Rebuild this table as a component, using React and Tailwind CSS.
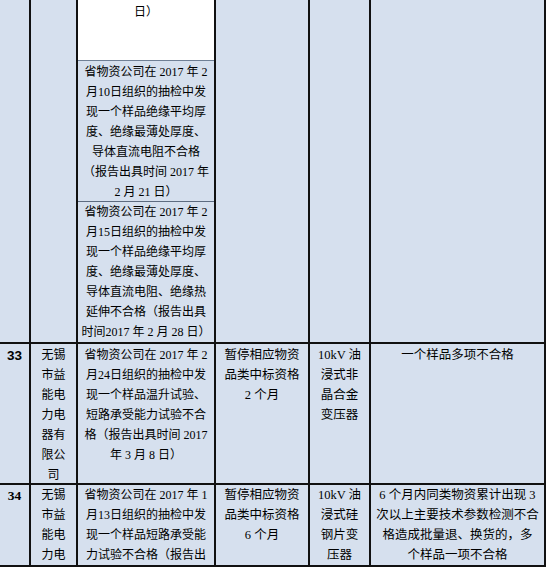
import React from "react";

const FONT = "font-['Liberation_Serif','Noto_Sans_CJK_SC',serif]";

function Lines({ lines, className = "" }) {
  return (
    <>
      {lines.map((l, i) => (
        <div key={i} className={"whitespace-nowrap leading-[20px] " + className}>
          {l}
        </div>
      ))}
    </>
  );
}

function Cell({ w, children, className = "" }) {
  return (
    <div
      className={
        "h-full shrink-0 border-r-2 border-[#111] bg-[#d6e0ee] flex flex-col items-center text-center " +
        w +
        " " +
        className
      }
    >
      {children}
    </div>
  );
}

export default function App() {
  return (
    <div className={"w-[546px] h-[567px] overflow-hidden bg-white text-black " + FONT}>
      {/* Row 32 continuation */}
      <div className="flex h-[344px] border-b-2 border-[#111]">
        <Cell w="w-[31px]" />
        <Cell w="w-[47px]" />
        <div className="h-full w-[138px] shrink-0 border-r-2 border-[#111] flex flex-col text-center text-[12px]">
          <div className="h-[62px] bg-white border-b border-[#6f7f95] pt-[2px] flex flex-col items-center">
            <Lines lines={["日）"]} />
          </div>
          <div className="h-[141px] bg-[#d6e0ee] border-b border-[#5d6b80] pt-[1px] flex flex-col items-center">
            <Lines
              lines={[
                "省物资公司在 2017 年 2",
                "月10日组织的抽检中发",
                "现一个样品绝缘平均厚",
                "度、绝缘最薄处厚度、",
                "导体直流电阻不合格",
                "（报告出具时间 2017 年",
                "2 月 21 日）",
              ]}
            />
          </div>
          <div className="flex-1 bg-[#d6e0ee] flex flex-col items-center">
            <Lines
              lines={[
                "省物资公司在 2017 年 2",
                "月15日组织的抽检中发",
                "现一个样品绝缘平均厚",
                "度、绝缘最薄处厚度、",
                "导体直流电阻、绝缘热",
                "延伸不合格（报告出具",
                "时间2017 年 2 月 28 日）",
              ]}
            />
          </div>
        </div>
        <Cell w="w-[94px]" />
        <Cell w="w-[61px]" />
        <Cell w="w-[175px]" />
      </div>

      {/* Row 33 */}
      <div className="flex h-[141px] border-b-2 border-[#111]">
        <Cell w="w-[31px]" className="pt-[2px]">
          <div className="leading-[20px] text-[13.5px] font-bold font-['Liberation_Sans',sans-serif]">33</div>
        </Cell>
        <Cell w="w-[47px]" className="pt-[1px] text-[12px]">
          <Lines lines={["无锡", "市益", "能电", "力电", "器有", "限公", "司"]} />
        </Cell>
        <Cell w="w-[138px]" className="pt-[1px] text-[12px]">
          <Lines
            lines={[
              "省物资公司在 2017 年 2",
              "月24日组织的抽检中发",
              "现一个样品温升试验、",
              "短路承受能力试验不合",
              "格（报告出具时间 2017",
              "年 3 月 8 日）",
            ]}
          />
        </Cell>
        <Cell w="w-[94px]" className="pt-[1px] text-[12.5px]">
          <Lines lines={["暂停相应物资", "品类中标资格", "2 个月"]} />
        </Cell>
        <Cell w="w-[61px]" className="pt-[1px] text-[12.5px]">
          <Lines lines={["10kV 油", "浸式非", "晶合金", "变压器"]} />
        </Cell>
        <Cell w="w-[175px]" className="pt-[1px] text-[12.5px]">
          <Lines lines={["一个样品多项不合格"]} />
        </Cell>
      </div>

      {/* Row 34 */}
      <div className="flex h-[82px] border-b-2 border-[#111] overflow-hidden">
        <Cell w="w-[31px]" className="pt-[1px]">
          <div className="leading-[20px] text-[13.5px] font-bold">34</div>
        </Cell>
        <Cell w="w-[47px]" className="text-[12px]">
          <Lines lines={["无锡", "市益", "能电", "力电"]} />
        </Cell>
        <Cell w="w-[138px]" className="text-[12px]">
          <Lines
            lines={[
              "省物资公司在 2017 年 1",
              "月13日组织的抽检中发",
              "现一个样品短路承受能",
              "力试验不合格（报告出",
            ]}
          />
        </Cell>
        <Cell w="w-[94px]" className="text-[12.5px]">
          <Lines lines={["暂停相应物资", "品类中标资格", "6 个月"]} />
        </Cell>
        <Cell w="w-[61px]" className="text-[12.5px]">
          <Lines lines={["10kV 油", "浸式硅", "钢片变", "压器"]} />
        </Cell>
        <Cell w="w-[175px]" className="text-[12.5px]">
          <Lines
            lines={[
              "6 个月内同类物资累计出现 3",
              "次以上主要技术参数检测不合",
              "格造成批量退、换货的，多",
              "个样品一项不合格",
            ]}
          />
        </Cell>
      </div>
    </div>
  );
}
